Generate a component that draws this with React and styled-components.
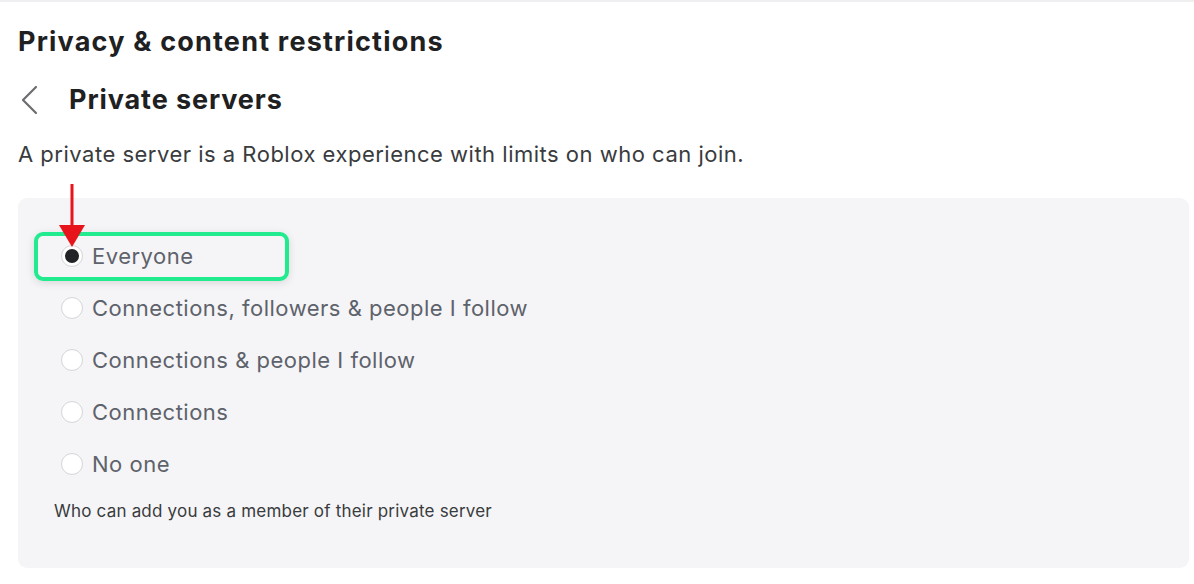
import React from "react";
import styled, { createGlobalStyle } from "styled-components";

const GlobalStyle = createGlobalStyle`
  html, body {
    margin: 0;
    padding: 0;
    background: #ffffff;
  }
  body {
    font-family: Inter, "Open Sans", "Liberation Sans", sans-serif;
    -webkit-font-smoothing: antialiased;
  }
`;

const Page = styled.div`
  width: 1194px;
  height: 584px;
  overflow: hidden;
  box-sizing: border-box;
  border-top: 2px solid #efeff1;
  padding: 0 5px 0 18px;
`;

const PageTitle = styled.h1`
  margin: 24px 0 0;
  font-size: 27px;
  line-height: 32px;
  font-weight: 700;
  color: #1e2022;
  letter-spacing: 1.2px;
`;

const SubHeader = styled.div`
  display: flex;
  align-items: center;
  gap: 29px;
  margin-top: 26px;
  height: 32px;
`;

const BackButton = styled.button`
  display: flex;
  align-items: center;
  justify-content: center;
  width: 22px;
  height: 32px;
  padding: 0;
  border: none;
  background: none;
`;

const SubTitle = styled.h2`
  margin: 0;
  font-size: 27px;
  line-height: 32px;
  font-weight: 700;
  color: #1e2022;
  letter-spacing: 0.9px;
`;

const Description = styled.p`
  margin: 24px 0 0;
  font-size: 22px;
  line-height: 28px;
  color: #393b3d;
  letter-spacing: 0.5px;
`;

const Panel = styled.div`
  position: relative;
  margin-top: 30px;
  background: #f5f5f7;
  border-radius: 9px;
  padding: 32px 36px 47px;
  height: 370px;
  box-sizing: border-box;
`;

const OptionList = styled.div`
  display: flex;
  flex-direction: column;
  margin-left: 7px;
`;

const Option = styled.label`
  display: flex;
  align-items: center;
  gap: 9px;
  height: 52px;
  font-size: 22px;
  letter-spacing: 0.5px;
  color: #5e626b;
`;

const Radio = styled.span`
  position: relative;
  width: 22px;
  height: 22px;
  box-sizing: border-box;
  border-radius: 50%;
  border: 1.5px solid #d4d5d8;
  background: #ffffff;
  flex-shrink: 0;

  &::after {
    content: "";
    display: ${(p) => (p.checked ? "block" : "none")};
    position: absolute;
    inset: 3px;
    border-radius: 50%;
    background: #222327;
  }
`;

const Helper = styled.div`
  margin-top: 11px;
  font-size: 17px;
  line-height: 20px;
  letter-spacing: 0.2px;
  color: #393b3d;
`;

const Highlight = styled.div`
  position: absolute;
  left: 16px;
  top: 34px;
  width: 255px;
  height: 49px;
  box-sizing: border-box;
  border: 4px solid #22ea8e;
  border-radius: 9px;
  box-shadow: 0 2px 8px rgba(0, 0, 0, 0.12);
  pointer-events: none;
`;

const Arrow = styled.svg`
  position: absolute;
  left: 40px;
  top: -14px;
  pointer-events: none;
`;

const options = [
  "Everyone",
  "Connections, followers & people I follow",
  "Connections & people I follow",
  "Connections",
  "No one",
];

export default function App() {
  return (
    <>
      <GlobalStyle />
      <Page>
        <PageTitle>Privacy &amp; content restrictions</PageTitle>
        <SubHeader>
          <BackButton aria-label="Back">
            <svg width="20" height="30" viewBox="0 0 20 30">
              <path
                d="M17 2 L4 15 L17 28"
                fill="none"
                stroke="#6b6d70"
                strokeWidth="2.2"
                strokeLinecap="round"
                strokeLinejoin="round"
              />
            </svg>
          </BackButton>
          <SubTitle>Private servers</SubTitle>
        </SubHeader>
        <Description>
          A private server is a Roblox experience with limits on who can join.
        </Description>
        <Panel>
          <OptionList>
            {options.map((o, i) => (
              <Option key={o}>
                <Radio checked={i === 0} />
                {o}
              </Option>
            ))}
          </OptionList>
          <Helper>Who can add you as a member of their private server</Helper>
          <Highlight />
          <Arrow width="28" height="64" viewBox="0 0 28 64">
            <rect x="12.5" y="0" width="3" height="44" fill="#e8141b" />
            <polygon points="1,41 27,41 14,63" fill="#e8141b" />
          </Arrow>
        </Panel>
      </Page>
    </>
  );
}
